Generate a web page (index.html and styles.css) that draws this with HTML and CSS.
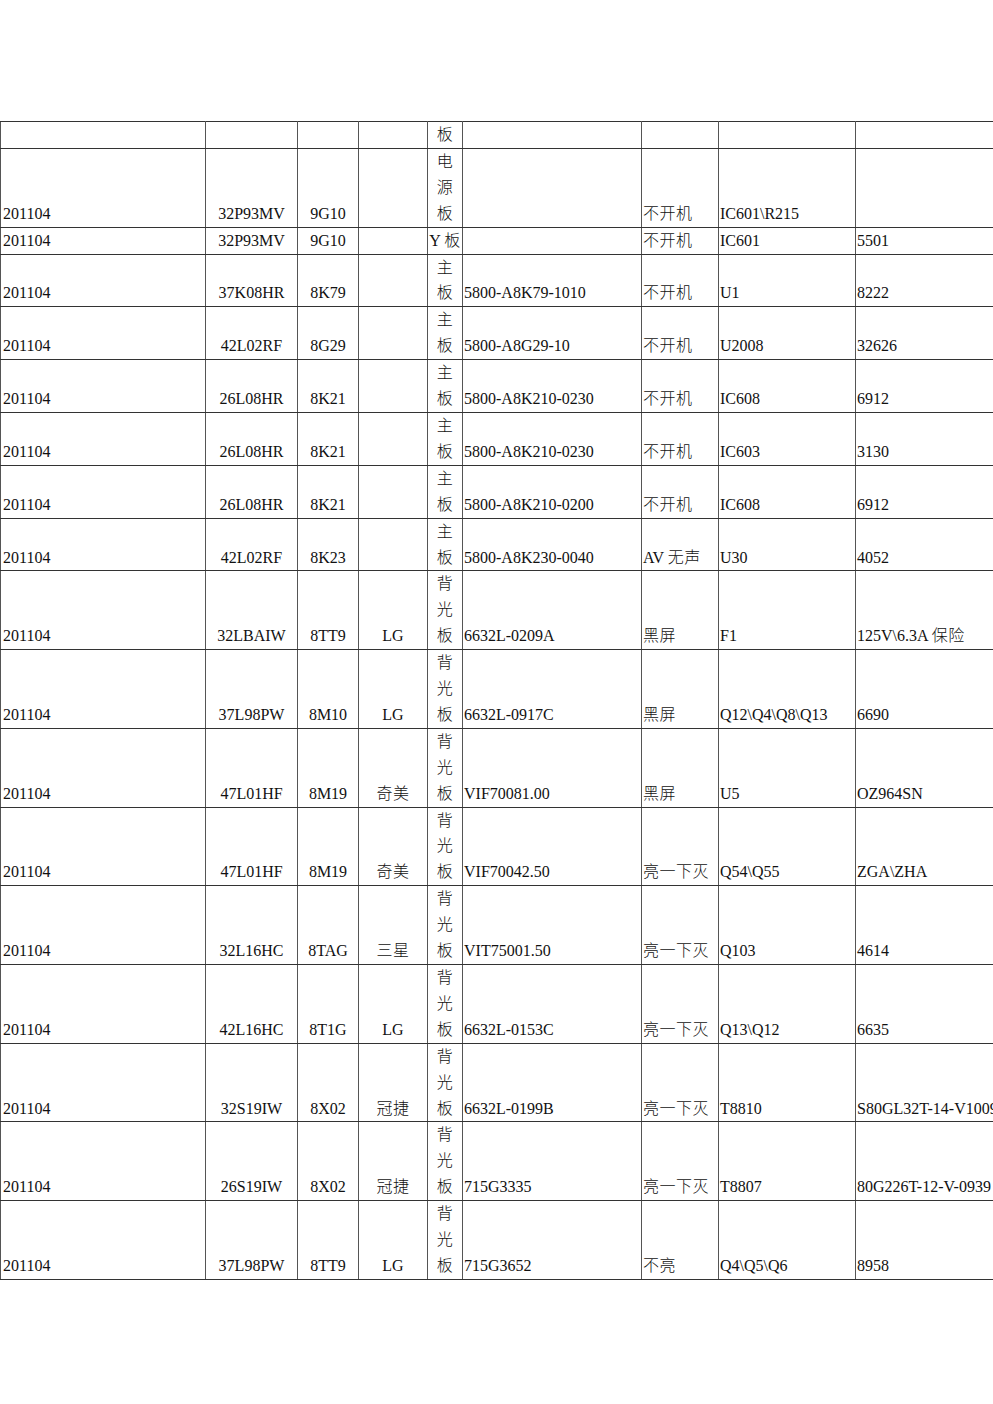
FILE: index.html
```html
<!DOCTYPE html>
<html lang="zh">
<head>
<meta charset="utf-8">
<title>维修记录</title>
<link rel="stylesheet" href="styles.css">
</head>
<body>
<div class="page">
<table class="sheet">
<colgroup>
<col class="w1"><col class="w2"><col class="w3"><col class="w4"><col class="w5"><col class="w6"><col class="w7"><col class="w8"><col class="w9">
</colgroup>
<tbody>
<tr><td></td><td></td><td></td><td></td><td><span class="c">板</span></td><td></td><td></td><td></td><td></td></tr>
<tr><td>201104</td><td>32P93MV</td><td>9G10</td><td></td><td><span class="c">电<br>源<br>板</span></td><td></td><td><span class="c">不开机</span></td><td>IC601\R215</td><td></td></tr>
<tr><td>201104</td><td>32P93MV</td><td>9G10</td><td></td><td>Y <span class="c">板</span></td><td></td><td><span class="c">不开机</span></td><td>IC601</td><td>5501</td></tr>
<tr><td>201104</td><td>37K08HR</td><td>8K79</td><td></td><td><span class="c">主<br>板</span></td><td>5800-A8K79-1010</td><td><span class="c">不开机</span></td><td>U1</td><td>8222</td></tr>
<tr><td>201104</td><td>42L02RF</td><td>8G29</td><td></td><td><span class="c">主<br>板</span></td><td>5800-A8G29-10</td><td><span class="c">不开机</span></td><td>U2008</td><td>32626</td></tr>
<tr><td>201104</td><td>26L08HR</td><td>8K21</td><td></td><td><span class="c">主<br>板</span></td><td>5800-A8K210-0230</td><td><span class="c">不开机</span></td><td>IC608</td><td>6912</td></tr>
<tr><td>201104</td><td>26L08HR</td><td>8K21</td><td></td><td><span class="c">主<br>板</span></td><td>5800-A8K210-0230</td><td><span class="c">不开机</span></td><td>IC603</td><td>3130</td></tr>
<tr><td>201104</td><td>26L08HR</td><td>8K21</td><td></td><td><span class="c">主<br>板</span></td><td>5800-A8K210-0200</td><td><span class="c">不开机</span></td><td>IC608</td><td>6912</td></tr>
<tr><td>201104</td><td>42L02RF</td><td>8K23</td><td></td><td><span class="c">主<br>板</span></td><td>5800-A8K230-0040</td><td>AV <span class="c">无声</span></td><td>U30</td><td>4052</td></tr>
<tr><td>201104</td><td>32LBAIW</td><td>8TT9</td><td>LG</td><td><span class="c">背<br>光<br>板</span></td><td>6632L-0209A</td><td><span class="c">黑屏</span></td><td>F1</td><td>125V\6.3A <span class="c">保险</span></td></tr>
<tr><td>201104</td><td>37L98PW</td><td>8M10</td><td>LG</td><td><span class="c">背<br>光<br>板</span></td><td>6632L-0917C</td><td><span class="c">黑屏</span></td><td>Q12\Q4\Q8\Q13</td><td>6690</td></tr>
<tr><td>201104</td><td>47L01HF</td><td>8M19</td><td><span class="c">奇美</span></td><td><span class="c">背<br>光<br>板</span></td><td>VIF70081.00</td><td><span class="c">黑屏</span></td><td>U5</td><td>OZ964SN</td></tr>
<tr><td>201104</td><td>47L01HF</td><td>8M19</td><td><span class="c">奇美</span></td><td><span class="c">背<br>光<br>板</span></td><td>VIF70042.50</td><td><span class="c">亮一下灭</span></td><td>Q54\Q55</td><td>ZGA\ZHA</td></tr>
<tr><td>201104</td><td>32L16HC</td><td>8TAG</td><td><span class="c">三星</span></td><td><span class="c">背<br>光<br>板</span></td><td>VIT75001.50</td><td><span class="c">亮一下灭</span></td><td>Q103</td><td>4614</td></tr>
<tr><td>201104</td><td>42L16HC</td><td>8T1G</td><td>LG</td><td><span class="c">背<br>光<br>板</span></td><td>6632L-0153C</td><td><span class="c">亮一下灭</span></td><td>Q13\Q12</td><td>6635</td></tr>
<tr><td>201104</td><td>32S19IW</td><td>8X02</td><td><span class="c">冠捷</span></td><td><span class="c">背<br>光<br>板</span></td><td>6632L-0199B</td><td><span class="c">亮一下灭</span></td><td>T8810</td><td>S80GL32T-14-V1009</td></tr>
<tr><td>201104</td><td>26S19IW</td><td>8X02</td><td><span class="c">冠捷</span></td><td><span class="c">背<br>光<br>板</span></td><td>715G3335</td><td><span class="c">亮一下灭</span></td><td>T8807</td><td>80G226T-12-V-0939</td></tr>
<tr><td>201104</td><td>37L98PW</td><td>8TT9</td><td>LG</td><td><span class="c">背<br>光<br>板</span></td><td>715G3652</td><td><span class="c">不亮</span></td><td>Q4\Q5\Q6</td><td>8958</td></tr>
</tbody>
</table>
</div>
</body>
</html>
```
FILE: styles.css
```css
html, body {
  margin: 0;
  padding: 0;
  background: #fff;
  overflow: hidden;
}
.page {
  width: 993px;
  height: 1404px;
  overflow: hidden;
  padding-top: 121px;
  box-sizing: border-box;
}
.sheet {
  border-collapse: collapse;
  table-layout: fixed;
  width: 1140px;
  color: #111;
  font-family: "Liberation Serif", serif;
  font-size: 16px;
}
.w1 { width: 205px; }
.w2 { width: 92px; }
.w3 { width: 61px; }
.w4 { width: 69px; }
.w5 { width: 35px; }
.w6 { width: 179px; }
.w7 { width: 77px; }
.w8 { width: 137px; }
.w9 { width: 285px; }
.sheet td {
  border-top: 1px solid #333;
  border-bottom: 1px solid #333;
  border-left: 1px solid #555;
  border-right: 1px solid #555;
  padding: 0 1px;
  line-height: 25.9px;
  vertical-align: bottom;
  white-space: nowrap;
}
.sheet td:nth-child(1) { padding-left: 2px; }
.sheet td:nth-child(2),
.sheet td:nth-child(3),
.sheet td:nth-child(4),
.sheet td:nth-child(5) {
  text-align: center;
  padding: 0;
}
.sheet td:nth-child(2),
.sheet td:nth-child(3),
.sheet td:nth-child(4),
.sheet td:nth-child(5),
.sheet td:nth-child(6) {
  border-left-color: #9a9a9a;
}
.c {
  font-family: "Noto Sans CJK SC", sans-serif;
  font-size: 16px;
  line-height: 14px;
  letter-spacing: 0.5px;
  font-weight: 300;
}
```
